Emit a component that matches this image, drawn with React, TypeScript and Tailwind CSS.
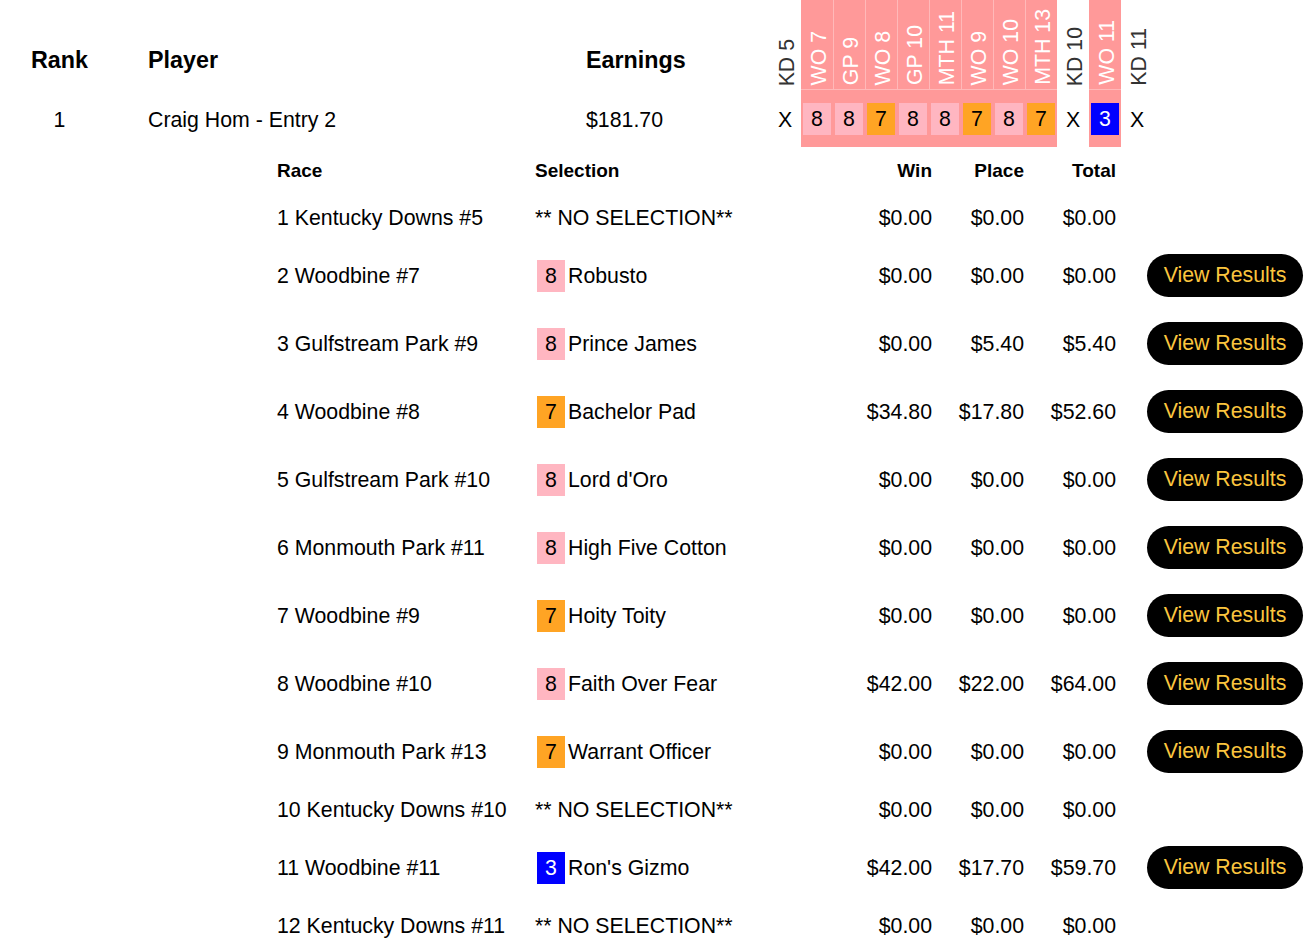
import React from "react";

type Tone = "pink" | "orange" | "blue";

const boxTone: Record<Tone, string> = {
  pink: "bg-[#ffb6c1] text-black",
  orange: "bg-[#ffa424] text-black",
  blue: "bg-[#0000ff] text-white",
};

// columns of the pick-sheet header, in race order
const legs = [
  { label: "KD 5", pick: null, hot: false },
  { label: "WO 7", pick: { n: 8, tone: "pink" as Tone }, hot: true },
  { label: "GP 9", pick: { n: 8, tone: "pink" as Tone }, hot: true },
  { label: "WO 8", pick: { n: 7, tone: "orange" as Tone }, hot: true },
  { label: "GP 10", pick: { n: 8, tone: "pink" as Tone }, hot: true },
  { label: "MTH 11", pick: { n: 8, tone: "pink" as Tone }, hot: true },
  { label: "WO 9", pick: { n: 7, tone: "orange" as Tone }, hot: true },
  { label: "WO 10", pick: { n: 8, tone: "pink" as Tone }, hot: true },
  { label: "MTH 13", pick: { n: 7, tone: "orange" as Tone }, hot: true },
  { label: "KD 10", pick: null, hot: false },
  { label: "WO 11", pick: { n: 3, tone: "blue" as Tone }, hot: true },
  { label: "KD 11", pick: null, hot: false },
];

type Race = {
  race: string;
  sel?: { n: number; tone: Tone; horse: string };
  win: string;
  place: string;
  total: string;
};

const races: Race[] = [
  { race: "1 Kentucky Downs #5", win: "$0.00", place: "$0.00", total: "$0.00" },
  { race: "2 Woodbine #7", sel: { n: 8, tone: "pink", horse: "Robusto" }, win: "$0.00", place: "$0.00", total: "$0.00" },
  { race: "3 Gulfstream Park #9", sel: { n: 8, tone: "pink", horse: "Prince James" }, win: "$0.00", place: "$5.40", total: "$5.40" },
  { race: "4 Woodbine #8", sel: { n: 7, tone: "orange", horse: "Bachelor Pad" }, win: "$34.80", place: "$17.80", total: "$52.60" },
  { race: "5 Gulfstream Park #10", sel: { n: 8, tone: "pink", horse: "Lord d'Oro" }, win: "$0.00", place: "$0.00", total: "$0.00" },
  { race: "6 Monmouth Park #11", sel: { n: 8, tone: "pink", horse: "High Five Cotton" }, win: "$0.00", place: "$0.00", total: "$0.00" },
  { race: "7 Woodbine #9", sel: { n: 7, tone: "orange", horse: "Hoity Toity" }, win: "$0.00", place: "$0.00", total: "$0.00" },
  { race: "8 Woodbine #10", sel: { n: 8, tone: "pink", horse: "Faith Over Fear" }, win: "$42.00", place: "$22.00", total: "$64.00" },
  { race: "9 Monmouth Park #13", sel: { n: 7, tone: "orange", horse: "Warrant Officer" }, win: "$0.00", place: "$0.00", total: "$0.00" },
  { race: "10 Kentucky Downs #10", win: "$0.00", place: "$0.00", total: "$0.00" },
  { race: "11 Woodbine #11", sel: { n: 3, tone: "blue", horse: "Ron's Gizmo" }, win: "$42.00", place: "$17.70", total: "$59.70" },
  { race: "12 Kentucky Downs #11", win: "$0.00", place: "$0.00", total: "$0.00" },
];

const App = () => {
  return (
    <div className="min-h-screen w-full bg-white font-['Liberation_Sans',Arial,sans-serif] text-black">
      {/* Leaderboard header */}
      <div className="flex h-[90px] text-[23.3px] font-bold leading-none">
        <div className="flex w-[119px] items-center justify-center pt-[32px]">Rank</div>
        <div className="flex w-[467px] items-center pl-[29px] pt-[32px]">Player</div>
        <div className="flex w-[183px] items-center pt-[32px]">Earnings</div>
        {legs.map((leg, i) => (
          <div
            key={leg.label}
            className={
              leg.hot
                ? `flex h-full w-[32px] flex-col items-center justify-end border-b border-[#ffb9b9] bg-[#ff9999] pb-[4px] text-white ${
                    legs[i - 1]?.hot ? "border-l" : ""
                  }`
                : "flex h-full w-[32px] flex-col items-center justify-end pb-[4px] text-[#333333]"
            }
          >
            <span className="rotate-180 whitespace-nowrap pr-[5px] text-[21.3px] font-normal leading-none [writing-mode:vertical-rl]">
              {leg.label}
            </span>
          </div>
        ))}
      </div>

      {/* Player row */}
      <div className="flex h-[57px] items-center text-[21.3px] leading-none">
        <div className="w-[119px] pt-[4px] text-center">1</div>
        <div className="w-[467px] pl-[29px] pt-[4px]">Craig Hom - Entry 2</div>
        <div className="w-[183px] pt-[4px]">$181.70</div>
        {legs.map((leg) => (
          <div
            key={leg.label}
            className={`flex h-full w-[32px] items-center justify-center ${leg.hot ? "bg-[#ff9999]" : ""}`}
          >
            {leg.pick ? (
              <div className={`flex h-[32px] w-[28px] items-center justify-center pt-[2px] ${boxTone[leg.pick.tone]}`}>
                {leg.pick.n}
              </div>
            ) : (
              <span className="pt-[4px]">X</span>
            )}
          </div>
        ))}
      </div>

      {/* Race breakdown */}
      <div className="pl-[277px]">
        <div className="flex h-[46px] items-center text-[19px] font-bold leading-none">
          <div className="w-[258px]">Race</div>
          <div className="w-[305px]">Selection</div>
          <div className="w-[92px] text-right">Win</div>
          <div className="w-[92px] text-right">Place</div>
          <div className="w-[92px] text-right">Total</div>
        </div>

        {races.map((r) => (
          <div
            key={r.race}
            className={`flex items-center text-[21.3px] leading-none ${r.sel ? "h-[68px]" : "h-[48px]"}`}
          >
            <div className="w-[258px] whitespace-nowrap pt-[4px]">{r.race}</div>
            <div className="flex w-[305px] items-center pt-[2px]">
              {r.sel ? (
                <>
                  <span
                    className={`ml-[2px] mr-[3px] flex h-[32px] w-[28px] items-center justify-center pt-[2px] ${boxTone[r.sel.tone]}`}
                  >
                    {r.sel.n}
                  </span>
                  <span className="pt-[2px]">{r.sel.horse}</span>
                </>
              ) : (
                <span className="pt-[2px]">** NO SELECTION**</span>
              )}
            </div>
            <div className="w-[92px] pt-[4px] text-right">{r.win}</div>
            <div className="w-[92px] pt-[4px] text-right">{r.place}</div>
            <div className="w-[92px] pt-[4px] text-right">{r.total}</div>
            {r.sel && (
              <button className="ml-[31px] flex h-[43px] w-[156px] items-center justify-center rounded-full bg-black pt-[2px] text-[21.3px] text-[#fbc53e]">
                View Results
              </button>
            )}
          </div>
        ))}
      </div>
    </div>
  );
};

export default App;
